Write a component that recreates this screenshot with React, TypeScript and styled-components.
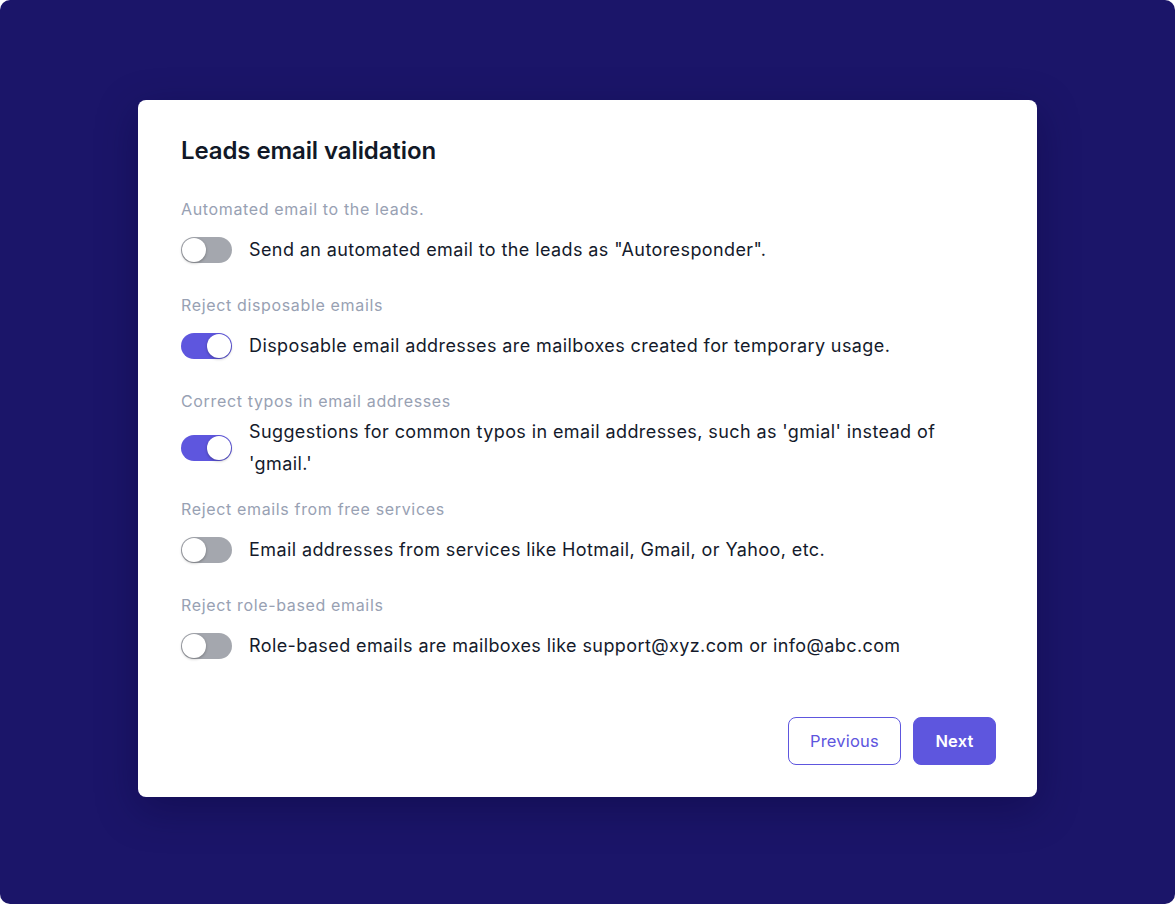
import React, { useState } from "react";
import styled, { createGlobalStyle } from "styled-components";

const GlobalStyle = createGlobalStyle`
  html, body {
    margin: 0;
    padding: 0;
    background: #ffffff;
  }
  * {
    box-sizing: border-box;
  }
`;

const settings = [
  {
    label: "Automated email to the leads.",
    text: 'Send an automated email to the leads as "Autoresponder".',
    on: false,
  },
  {
    label: "Reject disposable emails",
    text: "Disposable email addresses are mailboxes created for temporary usage.",
    on: true,
  },
  {
    label: "Correct typos in email addresses",
    text: "Suggestions for common typos in email addresses, such as 'gmial' instead of 'gmail.'",
    on: true,
  },
  {
    label: "Reject emails from free services",
    text: "Email addresses from services like Hotmail, Gmail, or Yahoo, etc.",
    on: false,
  },
  {
    label: "Reject role-based emails",
    text: "Role-based emails are mailboxes like support@xyz.com or info@abc.com",
    on: false,
  },
];

const App = () => {
  const [values, setValues] = useState(settings.map((s) => s.on));

  const flip = (i: number) =>
    setValues((v) => v.map((x, j) => (j === i ? !x : x)));

  return (
    <>
      <GlobalStyle />
      <Page>
        <Card>
          <Title>Leads email validation</Title>
          <List>
            {settings.map((s, i) => (
              <Section key={s.label}>
                <Label>{s.label}</Label>
                <Row>
                  <Toggle $on={values[i]} onClick={() => flip(i)}>
                    <Knob />
                  </Toggle>
                  <Description>{s.text}</Description>
                </Row>
              </Section>
            ))}
          </List>
          <Footer>
            <Button>Previous</Button>
            <Button $primary>Next</Button>
          </Footer>
        </Card>
      </Page>
    </>
  );
};

const Page = styled.div`
  width: 1175px;
  height: 904px;
  background: #1b1569;
  border-radius: 10px;
  display: flex;
  justify-content: center;
  align-items: flex-start;
  padding-top: 100px;
  font-family: Inter, "Liberation Sans", sans-serif;
`;

const Card = styled.div`
  width: 899px;
  background: #ffffff;
  border-radius: 8px;
  padding: 35px 41px 32px 43px;
  box-shadow: 0 12px 40px rgba(8, 4, 50, 0.35);
  display: flex;
  flex-direction: column;
`;

const Title = styled.h2`
  margin: 0 0 30px;
  font-size: 24px;
  line-height: 32px;
  font-weight: 600;
  color: #111827;
  letter-spacing: -0.1px;
`;

const List = styled.div`
  display: flex;
  flex-direction: column;
  gap: 15px;
`;

const Section = styled.div`
  display: flex;
  flex-direction: column;
  gap: 1px;
`;

const Label = styled.div`
  font-size: 16px;
  line-height: 24px;
  letter-spacing: 0.65px;
  color: #98a1b3;
`;

const Row = styled.div`
  display: flex;
  align-items: center;
  gap: 17px;
  min-height: 56px;
  padding: 2px 0;
`;

const Toggle = styled.button<{ $on: boolean }>`
  flex: none;
  width: 51px;
  height: 26px;
  border: none;
  border-radius: 13px;
  background: ${(p) => (p.$on ? "#5e56de" : "#a4a7ae")};
  display: flex;
  align-items: center;
  justify-content: ${(p) => (p.$on ? "flex-end" : "flex-start")};
  padding: 0 1px;
  cursor: pointer;
`;

const Knob = styled.span`
  width: 24px;
  height: 24px;
  border-radius: 50%;
  background: #ffffff;
  box-shadow: 0 1px 3px rgba(0, 0, 0, 0.3);
`;

const Description = styled.p`
  margin: 0;
  font-size: 18px;
  line-height: 32px;
  letter-spacing: 0.4px;
  color: #141a2b;
  max-width: 700px;
`;

const Footer = styled.div`
  display: flex;
  justify-content: flex-end;
  gap: 12px;
  margin-top: 43px;
`;

const Button = styled.button<{ $primary?: boolean }>`
  height: 48px;
  padding: 0 21px;
  min-width: 83px;
  border-radius: 8px;
  border: 1px solid #5e56de;
  background: ${(p) => (p.$primary ? "#5e56de" : "#ffffff")};
  color: ${(p) => (p.$primary ? "#ffffff" : "#5e56de")};
  font-family: Inter, "Liberation Sans", sans-serif;
  font-size: 16.5px;
  font-weight: ${(p) => (p.$primary ? 600 : 400)};
  letter-spacing: 0.2px;
  cursor: pointer;
`;

export default App;
